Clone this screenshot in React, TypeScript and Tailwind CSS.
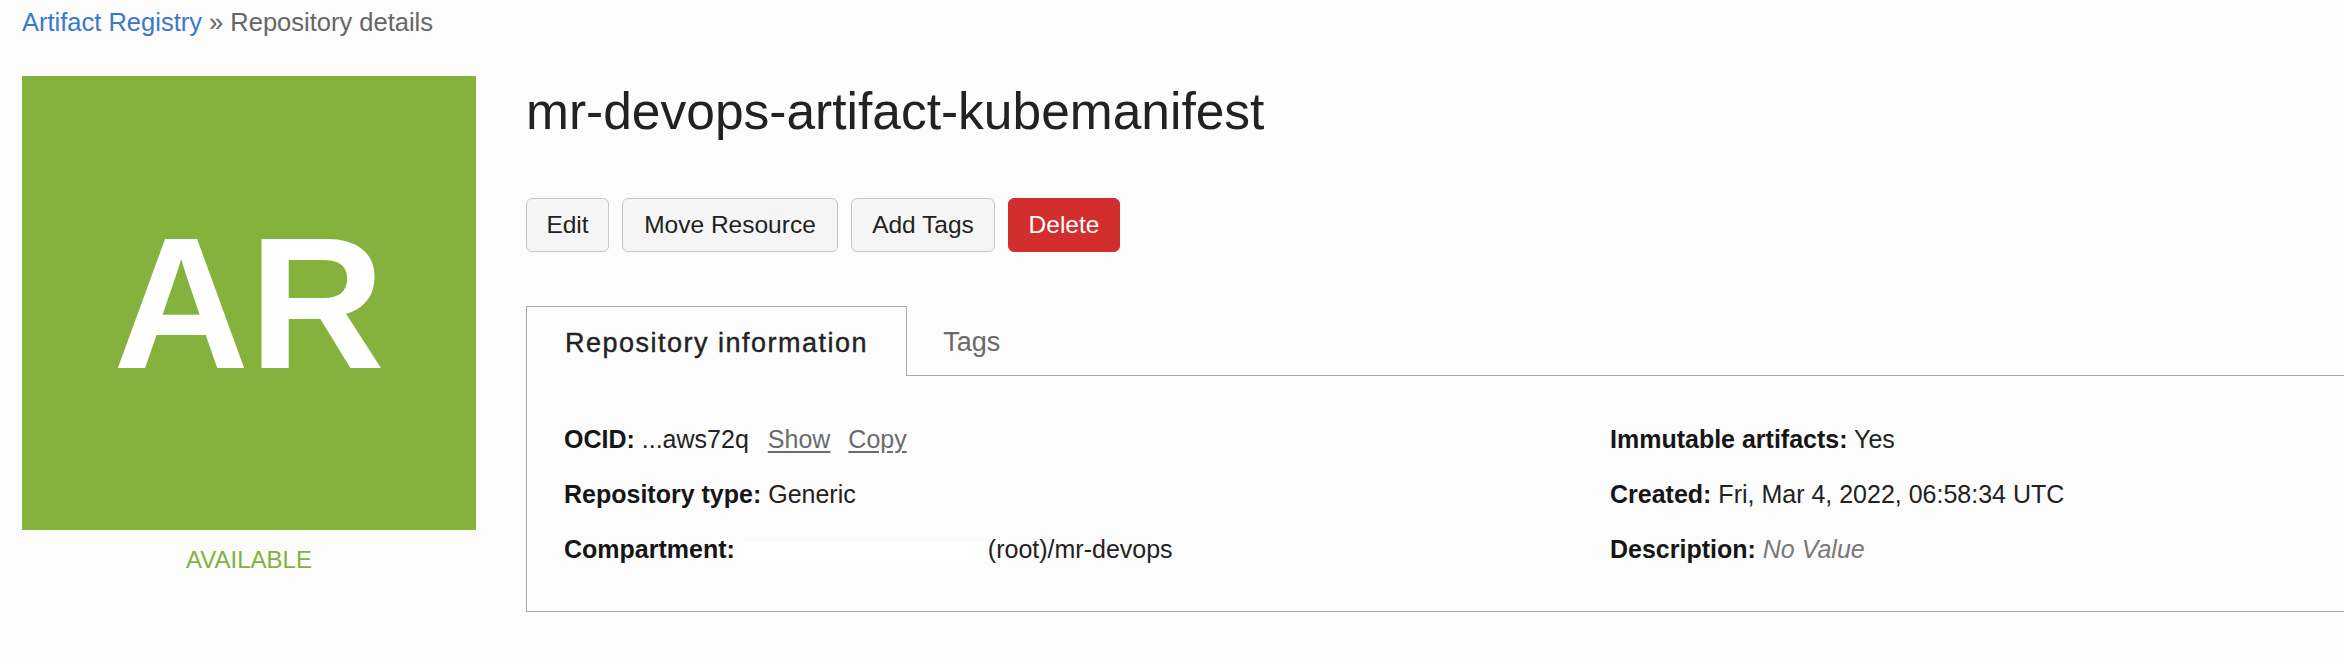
import React from 'react'

type Field = {
  label: string
  value: React.ReactNode
}

const actions = [
  { label: 'Edit', width: 'w-[83px]' },
  { label: 'Move Resource', width: 'w-[216px]' },
  { label: 'Add Tags', width: 'w-[144px]' },
]

export default function App() {
  const leftFields: Field[] = [
    {
      label: 'OCID:',
      value: (
        <>
          {' '}...aws72q
          <span className="ml-[19px] text-[#6b6b6b] underline underline-offset-[3px]">Show</span>
          <span className="ml-[18px] text-[#6b6b6b] underline underline-offset-[3px]">Copy</span>
        </>
      ),
    },
    { label: 'Repository type:', value: ' Generic' },
    {
      label: 'Compartment:',
      value: (
        <>
          <span className="ml-[9px] inline-block h-[19px] w-[242px] bg-white align-[-3px]" />
          <span className="ml-[2px]">(root)/mr-devops</span>
        </>
      ),
    },
  ]

  const rightFields: Field[] = [
    { label: 'Immutable artifacts:', value: ' Yes' },
    { label: 'Created:', value: ' Fri, Mar 4, 2022, 06:58:34 UTC' },
    { label: 'Description:', value: <span className="italic text-[#777]"> No Value</span> },
  ]

  const renderField = (f: Field) => (
    <div key={f.label} className="whitespace-nowrap leading-none">
      <span className="font-bold text-[#161616]">{f.label}</span>
      {f.value}
    </div>
  )

  return (
    <div
      className="h-[664px] w-[2344px] overflow-hidden bg-[#fcfcfc] text-[#222]"
      style={{ fontFamily: '"Liberation Sans", Arial, sans-serif' }}
    >
      {/* Breadcrumb */}
      <div className="pl-[22px] pt-[10px] text-[25.5px] leading-none">
        <span className="text-[#3b78c9]">Artifact Registry</span>
        <span className="text-[#666]"> » Repository details</span>
      </div>

      <div className="mt-[40px] flex">
        {/* Status tile */}
        <div className="ml-[22px] flex w-[454px] shrink-0 flex-col items-center">
          <div className="flex h-[454px] w-[454px] items-center justify-center bg-[#85b13d]">
            <span className="text-[188px] font-bold leading-none text-white">AR</span>
          </div>
          <div className="mt-[18px] text-[24px] leading-none text-[#86b03c]">AVAILABLE</div>
        </div>

        {/* Main column */}
        <div className="ml-[50px] flex-1 pt-[10px]">
          <h1 className="text-[51.5px] font-normal leading-none text-[#222]">
            mr-devops-artifact-kubemanifest
          </h1>

          <div className="mt-[61px] flex gap-[13px]">
            {actions.map((a) => (
              <button
                key={a.label}
                className={`${a.width} h-[54px] rounded-[6px] border border-[#c6c6c6] bg-[#f5f5f5] text-[24.5px] leading-none text-[#222]`}
              >
                {a.label}
              </button>
            ))}
            <button className="h-[54px] w-[112px] rounded-[6px] border border-[#d22e2e] bg-[#d22e2e] text-[24.5px] leading-none text-white">
              Delete
            </button>
          </div>

          {/* Tabs */}
          <div className="mt-[54px]">
            <div className="flex h-[70px]">
              <div className="border-l border-r border-t border-[#aaa] px-[38px] pt-[23px] text-[27px] leading-none tracking-[1.5px] text-[#222] [-webkit-text-stroke:0.4px_#222]">
                Repository information
              </div>
              <div className="flex-1 border-b border-[#aaa] pl-[36px] pt-[23px] text-[27px] leading-none text-[#6a6a6a]">
                Tags
              </div>
            </div>
            <div className="grid grid-cols-[1046px_1fr] border-b border-l border-[#aaa] pb-[49px] pl-[37px] pt-[51px] text-[25px]">
              <div className="flex flex-col gap-[30px]">{leftFields.map(renderField)}</div>
              <div className="flex flex-col gap-[30px]">{rightFields.map(renderField)}</div>
            </div>
          </div>
        </div>
      </div>
    </div>
  )
}
